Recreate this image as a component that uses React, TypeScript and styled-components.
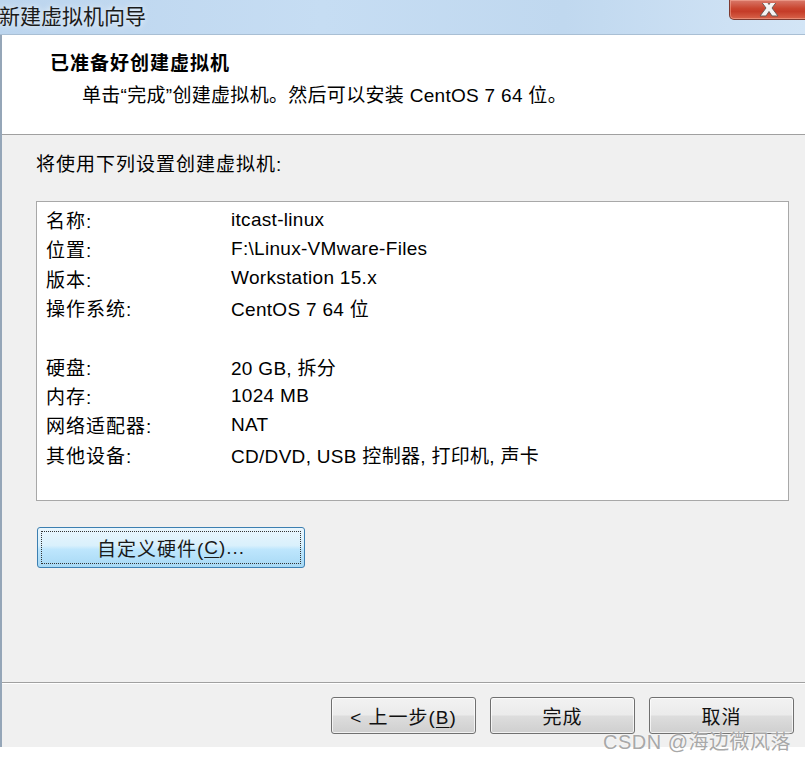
import React from 'react';
import styled, { createGlobalStyle } from 'styled-components';

const GlobalStyle = createGlobalStyle`
  html, body {
    margin: 0;
    padding: 0;
    background: #ffffff;
  }
  body {
    font-family: "Liberation Sans", "Noto Sans CJK SC", sans-serif;
    color: #000;
  }
`;

const Page = styled.div`
  position: relative;
  width: 805px;
  height: 760px;
  overflow: hidden;
  background: #fff;
`;

const Window = styled.div`
  display: flex;
  flex-direction: column;
  height: 747px;
`;

const TitleBar = styled.div`
  display: flex;
  justify-content: space-between;
  align-items: flex-start;
  height: 34px;
  border-bottom: 1px solid #a9bfd4;
  background: linear-gradient(90deg, #bcd5ee 0%, #c6ddf3 40%, #c0d8ef 70%, #d3e5f6 100%);
`;

const TitleText = styled.div`
  font-size: 21px;
  line-height: 34px;
  color: #1b1b1b;
  margin-left: -1px;
  text-shadow: 0 0 6px rgba(255, 255, 255, 0.9);
`;

const CloseButton = styled.div`
  display: flex;
  justify-content: center;
  align-items: flex-end;
  width: 80px;
  height: 20px;
  margin-right: -4px;
  box-sizing: border-box;
  border: 1px solid #7d3a30;
  border-top: none;
  border-radius: 0 0 5px 5px;
  background: linear-gradient(180deg, #d9796a 0%, #c9452f 45%, #c53c28 60%, #d8634a 100%);
  box-shadow: inset 0 0 0 1px rgba(255, 190, 170, 0.45);
`;

const Frame = styled.div`
  flex: 1;
  display: flex;
  flex-direction: column;
  border-left: 2px solid #95a6b8;
`;

const Header = styled.div`
  height: 100px;
  box-sizing: border-box;
  background: #fff;
  padding: 14px 0 0 48px;
  border-bottom: 1px solid #a0a0a0;
  box-shadow: 0 1px 0 #ffffff;
`;

const HeaderTitle = styled.div`
  font-size: 19px;
  font-weight: bold;
  line-height: 30px;
  letter-spacing: 1px;
`;

const HeaderSub = styled.div`
  font-size: 19px;
  line-height: 34px;
  padding-left: 32px;
  letter-spacing: 0.3px;
`;

const Body = styled.div`
  flex: 1;
  display: flex;
  flex-direction: column;
  align-items: flex-start;
  background: #f0f0f0;
  padding: 14px 16px 0 34px;
`;

const Intro = styled.div`
  font-size: 19px;
  line-height: 32px;
  letter-spacing: 1px;
  margin-bottom: 20px;
`;

const SummaryBox = styled.div`
  align-self: stretch;
  height: 300px;
  box-sizing: border-box;
  background: #fff;
  border: 1px solid #a8a8a8;
  padding: 3px 9px;
`;

const Row = styled.div`
  display: grid;
  grid-template-columns: 185px 1fr;
  height: 29.33px;
  align-items: center;
  font-size: 19px;
  letter-spacing: 0.3px;
`;

const Label = styled.span`
  letter-spacing: 1px;
`;

const CustomButton = styled.button`
  margin-top: 26px;
  margin-left: 1px;
  width: 268px;
  height: 41px;
  padding: 3px;
  border: 1px solid #3c7fb1;
  border-radius: 3px;
  background: linear-gradient(180deg, #eaf6fd 0%, #d9f0fc 45%, #bee6fd 55%, #a7d9f5 100%);
  font-family: inherit;
  font-size: 19px;
  color: #1a1a1a;
  cursor: pointer;
`;

const FocusRing = styled.span`
  display: flex;
  justify-content: center;
  align-items: center;
  height: 100%;
  box-sizing: border-box;
  border: 1px dotted #333;
  letter-spacing: 1px;
`;

const Footer = styled.div`
  display: flex;
  justify-content: flex-end;
  align-items: flex-start;
  gap: 14px;
  height: 65px;
  box-sizing: border-box;
  padding: 14px 11px 0 0;
  background: #f0f0f0;
  border-top: 1px solid #a0a0a0;
  box-shadow: inset 0 1px 0 #ffffff;
`;

const NavButton = styled.button`
  width: 145px;
  height: 37px;
  border: 1px solid #707070;
  border-radius: 3px;
  background: linear-gradient(180deg, #f2f2f2 0%, #ebebeb 48%, #dddddd 52%, #cfcfcf 100%);
  box-shadow: inset 0 0 0 1px rgba(255, 255, 255, 0.7);
  font-family: inherit;
  font-size: 19px;
  color: #111;
  letter-spacing: 1px;
  cursor: pointer;
`;

const Key = styled.u`
  text-underline-offset: 3px;
`;

const Watermark = styled.div`
  position: absolute;
  right: 14px;
  bottom: 5px;
  font-size: 20px;
  color: #a8a8a8;
  letter-spacing: 0.5px;
  text-shadow: 0 0 2px #fff;
`;

const rows: [string, string][] = [
  ['名称:', 'itcast-linux'],
  ['位置:', 'F:\\Linux-VMware-Files'],
  ['版本:', 'Workstation 15.x'],
  ['操作系统:', 'CentOS 7 64 位'],
  ['', ''],
  ['硬盘:', '20 GB, 拆分'],
  ['内存:', '1024 MB'],
  ['网络适配器:', 'NAT'],
  ['其他设备:', 'CD/DVD, USB 控制器, 打印机, 声卡'],
];

export default function App() {
  return (
    <Page>
      <GlobalStyle />
      <Window>
        <TitleBar>
          <TitleText>新建虚拟机向导</TitleText>
          <CloseButton>
            <svg width="24" height="16" viewBox="0 0 24 16">
              <path
                d="M3 -3 L9 -3 L12 1.5 L15 -3 L21 -3 L15 5 L21 13 L15 13 L12 8.5 L9 13 L3 13 L9 5 Z"
                fill="#f4f4f4"
                stroke="#6b5a55"
                strokeWidth="1"
              />
            </svg>
          </CloseButton>
        </TitleBar>
        <Frame>
          <Header>
            <HeaderTitle>已准备好创建虚拟机</HeaderTitle>
            <HeaderSub>单击“完成”创建虚拟机。然后可以安装 CentOS 7 64 位。</HeaderSub>
          </Header>
          <Body>
            <Intro>将使用下列设置创建虚拟机:</Intro>
            <SummaryBox>
              {rows.map(([label, value], i) => (
                <Row key={i}>
                  <Label>{label}</Label>
                  <span>{value}</span>
                </Row>
              ))}
            </SummaryBox>
            <CustomButton>
              <FocusRing>
                自定义硬件(<Key>C</Key>)...
              </FocusRing>
            </CustomButton>
          </Body>
          <Footer>
            <NavButton>
              &lt; 上一步(<Key>B</Key>)
            </NavButton>
            <NavButton>完成</NavButton>
            <NavButton>取消</NavButton>
          </Footer>
        </Frame>
      </Window>
      <Watermark>CSDN @海边微风落</Watermark>
    </Page>
  );
}
